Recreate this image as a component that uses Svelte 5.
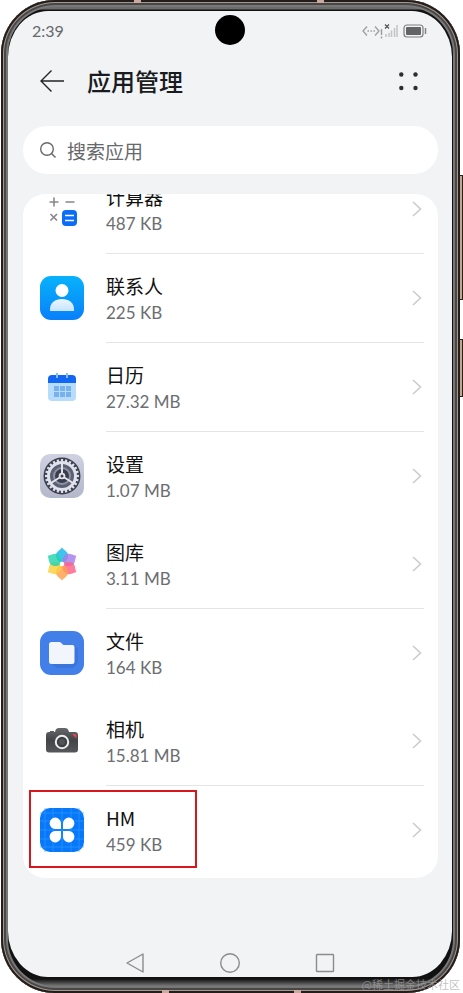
<script>
	const apps = [
		{ icon: "calculator", name: "计算器", size: "487 KB", divider: true },
		{ icon: "contacts", name: "联系人", size: "225 KB", divider: true },
		{ icon: "calendar", name: "日历", size: "27.32 MB", divider: true },
		{ icon: "settings", name: "设置", size: "1.07 MB", divider: false },
		{ icon: "gallery", name: "图库", size: "3.11 MB", divider: true },
		{ icon: "files", name: "文件", size: "164 KB", divider: false },
		{ icon: "camera", name: "相机", size: "15.81 MB", divider: true },
		{ icon: "hm", name: "HM", size: "459 KB", divider: false, marked: true }
	];

	const petals = ["#19b5ec", "#a67be8", "#fb6286", "#fba04e", "#fbcf3c", "#23d3ae"];
	const teeth = Array.from({ length: 24 }, (_, i) => i * 15);

	let query = $state("");
</script>

<div class="device">
	<div class="frame">
		<main class="screen">
			<header class="status">
				<span>2:39</span>
				<svg width="66" height="16" viewBox="0 0 66 16" fill="none" aria-hidden="true">
					<g stroke="#9c9ea0" stroke-width="1.3">
						<path d="M5 3.5 1 8l4 4.5M13 3.5 17 8l-4 4.5" />
						<path d="M5.5 8h1.500M8.500 8H10M11.500 8H13" />
					</g>
					<path d="M19.500 6v6M19.500 13.500v2" stroke="#9a9c9e" stroke-width="1.4" />
					<path d="m23 1.500 4 4m0-4-4 4" stroke="#55575a" stroke-width="1.3" />
					<g stroke="#c1c3c5" stroke-width="1.5">
						<path d="M24 11v3M27 10v4M29.500 7.500V14M32.500 5v9M35 2v12" />
					</g>
					<rect x="42" y="2" width="19" height="12" rx="3" stroke="#7c7e80" stroke-width="1.2" />
					<rect x="44" y="4" width="15" height="8" rx="1" fill="#626467" />
					<path d="M63.500 5v6" stroke="#808284" stroke-width="1.5" />
				</svg>
			</header>
			<span class="lens"></span>

			<div class="titlebar">
				<button class="plain" aria-label="返回">
					<svg width="26" height="24" viewBox="0 0 26 24" fill="none" stroke="#232528" stroke-width="1.400">
						<path d="M12.500 1.500 2 12l10.500 10.500M2 12h23" />
					</svg>
				</button>
				<h1>应用管理</h1>
				<button class="plain" aria-label="更多">
					<svg width="20" height="20" viewBox="0 0 20 20" fill="#2c2e31">
						<circle cx="3.300" cy="3.500" r="2.200" />
						<circle cx="17.500" cy="3.500" r="2.200" />
						<circle cx="3.300" cy="17" r="2.200" />
						<circle cx="17.500" cy="17" r="2.200" />
					</svg>
				</button>
			</div>

			<label class="search">
				<svg width="18" height="18" viewBox="0 0 18 18" fill="none" stroke="#66686b" stroke-width="1.400">
					<circle cx="8" cy="8" r="6.300" />
					<path d="m12.500 12.500 4 4" />
				</svg>
				<input type="text" aria-label="搜索应用" placeholder="搜索应用" bind:value={query} />
			</label>

			<section class="card">
				<ul>
					{#each apps as app (app.name)}
						<li class:divider={app.divider}>
							<button class="row">
								<svg class="icon" viewBox="0 0 44 44" aria-hidden="true">
									{#if app.icon === "calculator"}
										<g stroke="#85878a" stroke-width="1.600">
											<path d="M9.500 15h9M14 10.500v9M25.500 15h9M10.500 27l6.500 6.500m0-6.500-6.500 6.500" />
										</g>
										<rect x="22" y="23" width="15" height="16" rx="4" fill="#096df5" />
										<path d="M25 28.500h9M25 33.500h9" stroke="#fff" stroke-width="1.600" />
									{:else if app.icon === "contacts"}
										<defs>
											<linearGradient id="sky" x2="0" y2="1">
												<stop stop-color="#08b2fb" />
												<stop offset="1" stop-color="#0880fa" />
											</linearGradient>
											<linearGradient id="torso" x2="0" y2="1">
												<stop stop-color="#eaf6ff" />
												<stop offset="1" stop-color="#c9e4fe" />
											</linearGradient>
										</defs>
										<rect width="44" height="44" rx="11" fill="url(#sky)" />
										<circle cx="22" cy="14.500" r="6.500" fill="#fff" />
										<path d="M10 35v-2c0-6 5-10 12-10s12 4 12 10v2z" fill="url(#torso)" />
									{:else if app.icon === "calendar"}
										<path d="M8 15h28v17a4 4 0 0 1-4 4H12a4 4 0 0 1-4-4z" fill="#b7dcfe" />
										<path d="M8 18v-4a4 4 0 0 1 4-4h20a4 4 0 0 1 4 4v4z" fill="#1266f1" />
										<path d="M17 8v5M27 8v5" stroke="#83bcfb" stroke-width="2" />
										<path d="M14 21h5v5h-5zM20 21h5v5h-5zM26 21h5v5h-5zM14 27h5v5h-5zM20 27h5v5h-5zM26 27h5v5h-5z" fill="#77b2ef" />
									{:else if app.icon === "settings"}
										<defs>
											<linearGradient id="steel" x2="0" y2="1">
												<stop stop-color="#d0d2e2" />
												<stop offset="1" stop-color="#b3b7ca" />
											</linearGradient>
										</defs>
										<rect width="44" height="44" rx="10" fill="url(#steel)" />
										<circle cx="22" cy="22" r="18.500" fill="#393d4c" />
										<g stroke="#dcdfea" stroke-width="2.300">
											{#each teeth as angle}
												<path d="M22 5v4" transform="rotate({angle} 22 22)" />
											{/each}
										</g>
										<circle cx="22" cy="22" r="13.500" fill="#5b6073" stroke="#dfe2ed" stroke-width="3" />
										<circle cx="22" cy="22" r="8" fill="#393d4c" stroke="#8d92a5" stroke-width="2" />
										<path d="M22 22V9M22 22l-11 7M22 22l11 7" stroke="#e3e5ee" stroke-width="2" />
										<circle cx="22" cy="22" r="3.300" fill="#e3e5ee" />
										<circle cx="22" cy="22" r="1.500" fill="#393d4c" />
									{:else if app.icon === "gallery"}
										{#each petals as color, i}
											<path
												d="M22 21.500c-5-2-6.500-6-6-9.500C17.500 9 20 8 22 5.500 24 8 26.500 9 28 12c.5 3.500-1 7.500-6 9.500z"
												fill={color}
												fill-opacity=".82"
												transform="rotate({i * 60} 22 22)"
											/>
										{/each}
										<circle cx="22" cy="22" r="2.300" fill="#fff" />
									{:else if app.icon === "files"}
										<rect width="44" height="44" rx="11" fill="#437fe8" />
										<path d="m34 14 4 4v11a8 8 0 0 1-8 8H17l-7-5z" fill="#3b74da" />
										<path d="M9 13.500a2.500 2.500 0 0 1 2.500-2.500h8c2 0 2.500 3 4.500 3h8.500a2 2 0 0 1 2 2v14.500a2.500 2.500 0 0 1-2.500 2.500H11.500A2.500 2.500 0 0 1 9 30.500z" fill="#f2f5fb" />
									{:else if app.icon === "camera"}
										<defs>
											<linearGradient id="body" x2="0" y2="1">
												<stop stop-color="#66686b" />
												<stop offset=".5" stop-color="#424447" />
												<stop offset="1" stop-color="#55575a" />
											</linearGradient>
										</defs>
										<path d="M10 13v-1h4v1h1c1-4 2-4 7-4s6 0 7 4h6a3 3 0 0 1 3 3v14.500a3 3 0 0 1-3 3H9a3 3 0 0 1-3-3V16a3 3 0 0 1 3-3z" fill="url(#body)" />
										<circle cx="22" cy="23" r="6.200" fill="#3d3f42" stroke="#eee" stroke-width="2" />
										<circle cx="22" cy="23" r="3" fill="#515356" />
										<path d="M33 15.500h3v3z" fill="#e64450" stroke="#e64450" />
									{:else}
										<rect width="44" height="44" rx="10" fill="#0878fa" />
										<path d="M5 0v44M13 0v44M22 0v44M31 0v44M39 0v44M0 5h44M0 13h44M0 22h44M0 31h44M0 39h44" stroke="#319cff" stroke-width=".6" />
										<path
											d="M21 21h-6a5.700 5.700 0 1 1 6-6zM23 21v-6a5.700 5.700 0 1 1 6 6zM21 23v6a5.700 5.700 0 1 1-6-6zM23 23h6a5.700 5.700 0 1 1-6 6z"
											fill="#fff"
										/>
									{/if}
								</svg>
								<span class="text">
									<span class="name">{app.name}</span>
									<span class="size">{app.size}</span>
								</span>
								<svg class="chevron" width="10" height="16" viewBox="0 0 10 16" fill="none" stroke="#cbccce" stroke-width="1.600">
									<path d="m1 1 7.500 7L1 15" />
								</svg>
							</button>
							{#if app.marked}
								<span class="marker"></span>
							{/if}
						</li>
					{/each}
				</ul>
			</section>

			<nav>
				<button class="plain" aria-label="后退">
					<svg width="20" height="20" viewBox="0 0 20 20" fill="none" stroke="#8a8c8f" stroke-width="1.400" stroke-linejoin="round">
						<path d="M18 1v18L2 10z" />
					</svg>
				</button>
				<button class="plain" aria-label="主屏幕">
					<svg width="20" height="20" viewBox="0 0 20 20" fill="none" stroke="#8a8c8f" stroke-width="1.400">
						<circle cx="10" cy="10" r="9.300" />
					</svg>
				</button>
				<button class="plain" aria-label="最近任务">
					<svg width="20" height="20" viewBox="0 0 20 20" fill="none" stroke="#8a8c8f" stroke-width="1.400">
						<rect x="1.500" y="1.500" width="17" height="17" rx=".5" />
					</svg>
				</button>
			</nav>
		</main>
	</div>
	<span class="key volume"></span>
	<span class="key power"></span>
	<span class="band top-left"></span>
	<span class="band top-right"></span>
	<span class="band bottom-left"></span>
	<span class="band bottom-right"></span>
	<span class="watermark">@稀土掘金技术社区</span>
</div>

<style>
	:global(body) {
		margin: 0;
		background: #fff;
	}

	.device {
		position: relative;
		display: flex;
		box-sizing: border-box;
		min-height: 100vh;
		padding: 0 3px 0 1px;
		font-family: "Noto Sans CJK SC", sans-serif;
	}

	.frame {
		display: flex;
		flex: 1;
		min-width: 0;
		padding: 11px 8px 16px 7px;
		border-radius: 54px;
		background: linear-gradient(#6c6c6c 0 9px, #111 10px calc(100% - 14px), #777 calc(100% - 7px), #333);
		box-shadow: inset 0 0 0 2px #241d1a, inset 0 0 0 3px #a09692, inset 0 0 0 5px #494746, inset 0 0 0 7px #777;
	}

	.screen {
		position: relative;
		display: flex;
		flex: 1;
		flex-direction: column;
		min-width: 0;
		border-radius: 40px / 46px;
		background: #f1f3f5;
	}

	.status {
		display: flex;
		align-items: center;
		justify-content: space-between;
		height: 40px;
		padding: 0 24px;
		color: #66686b;
		font: 16px/20px Lato, sans-serif;
	}

	.lens {
		position: absolute;
		top: 4px;
		left: 50%;
		width: 30px;
		height: 30px;
		margin-left: -15px;
		border-radius: 50%;
		background: #000;
	}

	.titlebar {
		display: flex;
		align-items: center;
		height: 60px;
		padding: 0 34px 0 31px;
	}

	.plain {
		display: flex;
		border: 0;
		padding: 0;
		background: none;
	}

	h1 {
		flex: 1;
		margin: 0 0 0 22px;
		color: #191b1e;
		font-size: 24px;
		font-weight: 500;
		line-height: 32px;
	}

	.search {
		display: flex;
		align-items: center;
		gap: 10px;
		height: 48px;
		margin: 15px 14px 0 15px;
		padding: 0 16px;
		border-radius: 24px;
		background: #fff;
	}

	input {
		flex: 1;
		min-width: 0;
		border: 0;
		outline: 0;
		padding: 0;
		color: #191b1e;
		font: inherit;
		font-size: 19px;
		background: none;
	}

	input::placeholder {
		color: #66686b;
		opacity: 1;
	}

	.card {
		overflow: hidden;
		margin: 20px 14px 0 15px;
		border-radius: 22px;
		padding-bottom: 4px;
		background: #fff;
	}

	/* the list is scrolled part of the way through its first row */
	ul {
		margin: -29px 0 0;
		padding: 0;
		list-style: none;
	}

	li {
		position: relative;
	}

	.divider::after {
		content: "";
		display: block;
		height: 1px;
		margin: 0 14px 0 83px;
		background: #e4e5e7;
	}

	.row {
		display: flex;
		align-items: center;
		width: 100%;
		height: 88px;
		border: 0;
		padding: 0 16px 0 17px;
		font-family: inherit;
		text-align: left;
		background: none;
	}

	.icon {
		width: 44px;
		height: 44px;
	}

	.text {
		display: flex;
		flex: 1;
		flex-direction: column;
		gap: 3px;
		margin-left: 22px;
		padding-top: 2px;
	}

	.name {
		color: #111;
		font-size: 19px;
		font-weight: 400;
		line-height: 24px;
	}

	.size {
		color: #6c6e71;
		font-family: Lato, sans-serif;
		font-size: 17px;
		line-height: 24px;
	}

	.marker {
		position: absolute;
		top: 4px;
		left: 6px;
		box-sizing: border-box;
		width: 168px;
		height: 78px;
		border: 2px solid #d9161b;
		pointer-events: none;
	}

	nav {
		display: flex;
		justify-content: center;
		gap: 75px;
		margin-top: auto;
		padding-bottom: 4px;
	}

	.key {
		position: absolute;
		right: 0;
		box-sizing: border-box;
		width: 4px;
		border: 1px solid #29211c;
		background: #c5a48c;
	}

	.volume {
		top: 175px;
		height: 125px;
	}

	.power {
		top: 339px;
		height: 58px;
	}

	.band {
		position: absolute;
		width: 7px;
		height: 3px;
		background: #c9a9a0;
	}

	.top-left {
		top: 0;
		left: 29%;
	}

	.top-right {
		top: 0;
		right: 30%;
	}

	.bottom-left {
		bottom: 0;
		left: 35%;
	}

	.bottom-right {
		right: 35%;
		bottom: 0;
	}

	.watermark {
		position: absolute;
		right: 3px;
		bottom: 2px;
		color: #a5a5a5b0;
		font-size: 11px;
		line-height: 14px;
	}
</style>
